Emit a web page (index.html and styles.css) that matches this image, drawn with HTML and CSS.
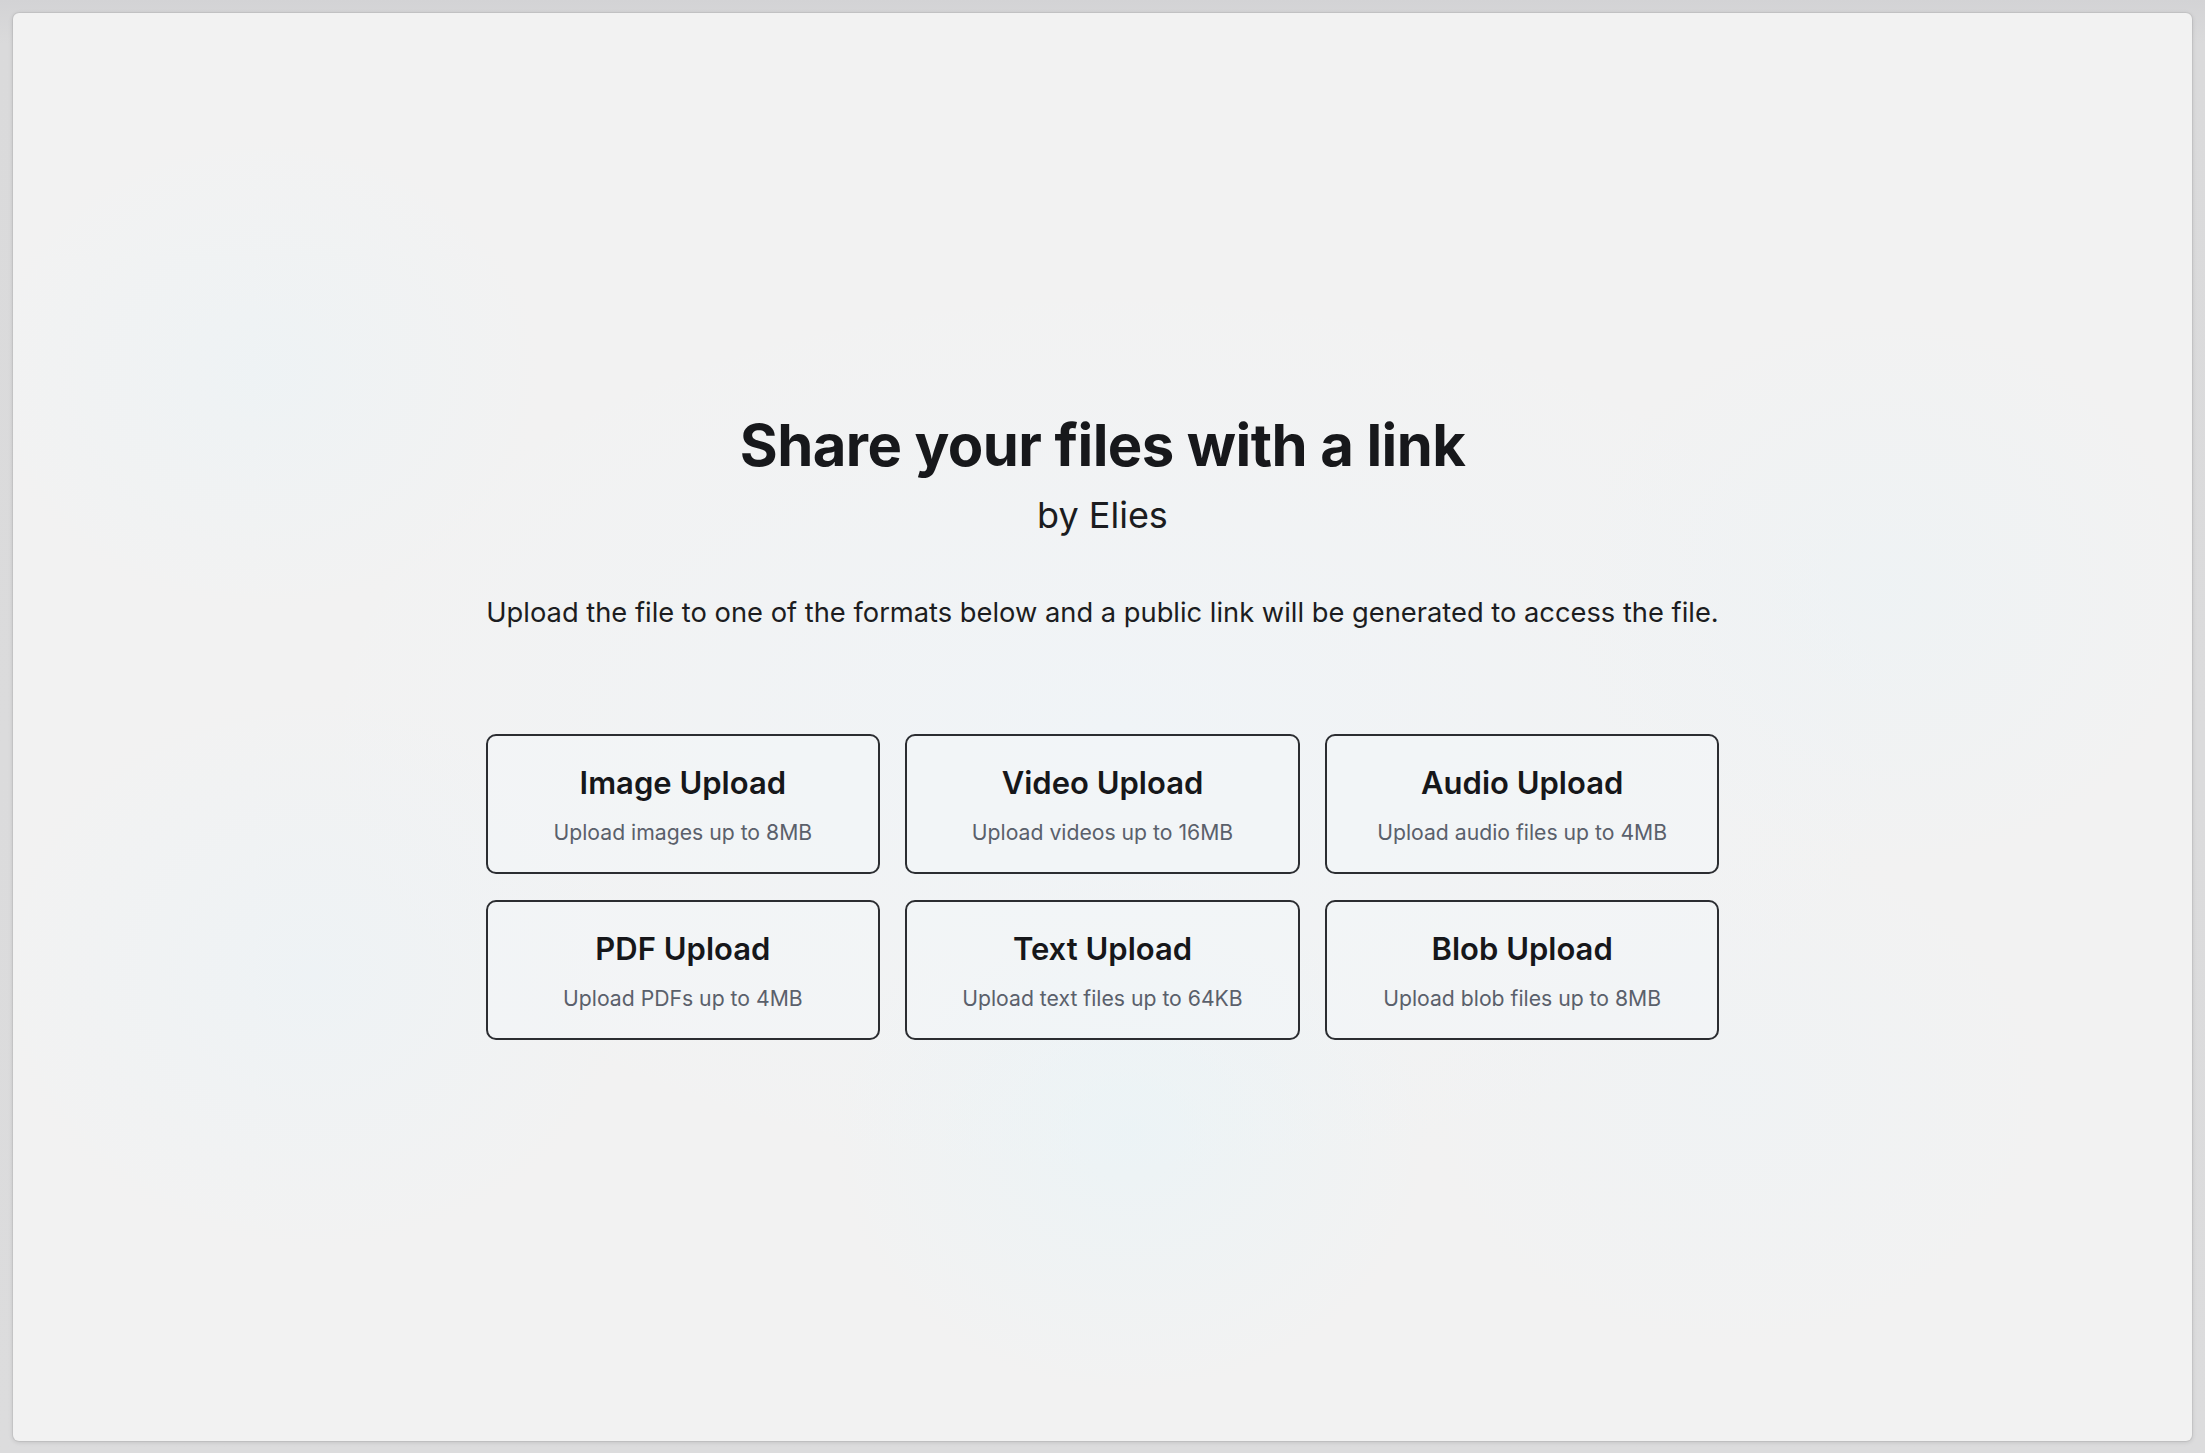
FILE: index.html
```html
<!DOCTYPE html>
<html lang="en">
<head>
<meta charset="utf-8">
<title>Share your files with a link</title>
<link rel="stylesheet" href="styles.css">
</head>
<body>
<div class="frame">
  <main class="panel">
    <section class="content">
      <h1 class="title">Share your files with a link</h1>
      <p class="byline">by Elies</p>
      <p class="desc">Upload the file to one of the formats below and a public link will be generated to access the file.</p>
      <div class="grid">
        <a class="card" href="#"><span class="card-title">Image Upload</span><span class="card-sub">Upload images up to 8MB</span></a>
        <a class="card" href="#"><span class="card-title">Video Upload</span><span class="card-sub">Upload videos up to 16MB</span></a>
        <a class="card" href="#"><span class="card-title">Audio Upload</span><span class="card-sub">Upload audio files up to 4MB</span></a>
        <a class="card" href="#"><span class="card-title">PDF Upload</span><span class="card-sub">Upload PDFs up to 4MB</span></a>
        <a class="card" href="#"><span class="card-title">Text Upload</span><span class="card-sub">Upload text files up to 64KB</span></a>
        <a class="card" href="#"><span class="card-title">Blob Upload</span><span class="card-sub">Upload blob files up to 8MB</span></a>
      </div>
    </section>
  </main>
</div>
</body>
</html>
```

FILE: styles.css
```css
* { box-sizing: border-box; }
html, body { margin: 0; height: 100%; }
body {
  background: #d9d9da;
  font-family: Inter, "Noto Sans", "Liberation Sans", sans-serif;
  color: #18191c;
}
.frame {
  height: 100%;
  padding: 13px 13px 12px 13px;
  background: linear-gradient(#d3d3d5, #dadadb 3%, #dcdcdd);
}
.panel {
  height: 100%;
  border-radius: 6px;
  background:
    radial-gradient(ellipse 300px 260px at 1118px 1120px, rgba(232,244,248,0.6), rgba(232,244,248,0) 100%),
    radial-gradient(ellipse 280px 240px at 250px 360px, rgba(234,243,247,0.5), rgba(234,243,247,0) 100%),
    radial-gradient(ellipse 320px 280px at 300px 960px, rgba(234,243,248,0.5), rgba(234,243,248,0) 100%),
    radial-gradient(ellipse 320px 280px at 1870px 580px, rgba(234,243,247,0.45), rgba(234,243,247,0) 100%),
    radial-gradient(ellipse 320px 260px at 1720px 1080px, rgba(236,243,247,0.4), rgba(236,243,247,0) 100%),
    radial-gradient(ellipse 1000px 560px at 1100px 720px, #f0f4f7, rgba(240,244,247,0) 80%),
    #f2f2f2;
  box-shadow: 0 0 0 1px rgba(0,0,0,0.05), 0 1px 5px rgba(0,0,0,0.14);
  display: flex;
  align-items: center;
  justify-content: center;
}
.content {
  width: 1234px;
  display: flex;
  flex-direction: column;
  align-items: center;
  text-align: center;
  margin-top: -4px;
}
.title {
  margin: 0;
  font-size: 58px;
  line-height: 70px;
  font-weight: 700;
  letter-spacing: -0.01em;
  color: #17181b;
}
.byline {
  margin: 15px 0 0;
  font-size: 36px;
  line-height: 41px;
  font-weight: 400;
  color: #1b1c20;
}
.desc {
  margin: 57px 0 0;
  font-size: 27.3px;
  line-height: 39px;
  color: #1c1d21;
  white-space: nowrap;
}
.grid {
  margin-top: 102px;
  width: 100%;
  display: grid;
  grid-template-columns: repeat(3, 1fr);
  gap: 26px 25px;
}
.card {
  height: 140px;
  border: 2px solid #2b2d31;
  border-radius: 10px;
  display: flex;
  flex-direction: column;
  align-items: center;
  padding-top: 27.5px;
  text-decoration: none;
  background: rgba(245,247,250,0.4);
}
.card-title {
  font-size: 31px;
  line-height: 37px;
  font-weight: 600;
  color: #16171a;
}
.card-sub {
  margin-top: 17px;
  font-size: 21.2px;
  line-height: 29px;
  color: #5a606b;
}
```
